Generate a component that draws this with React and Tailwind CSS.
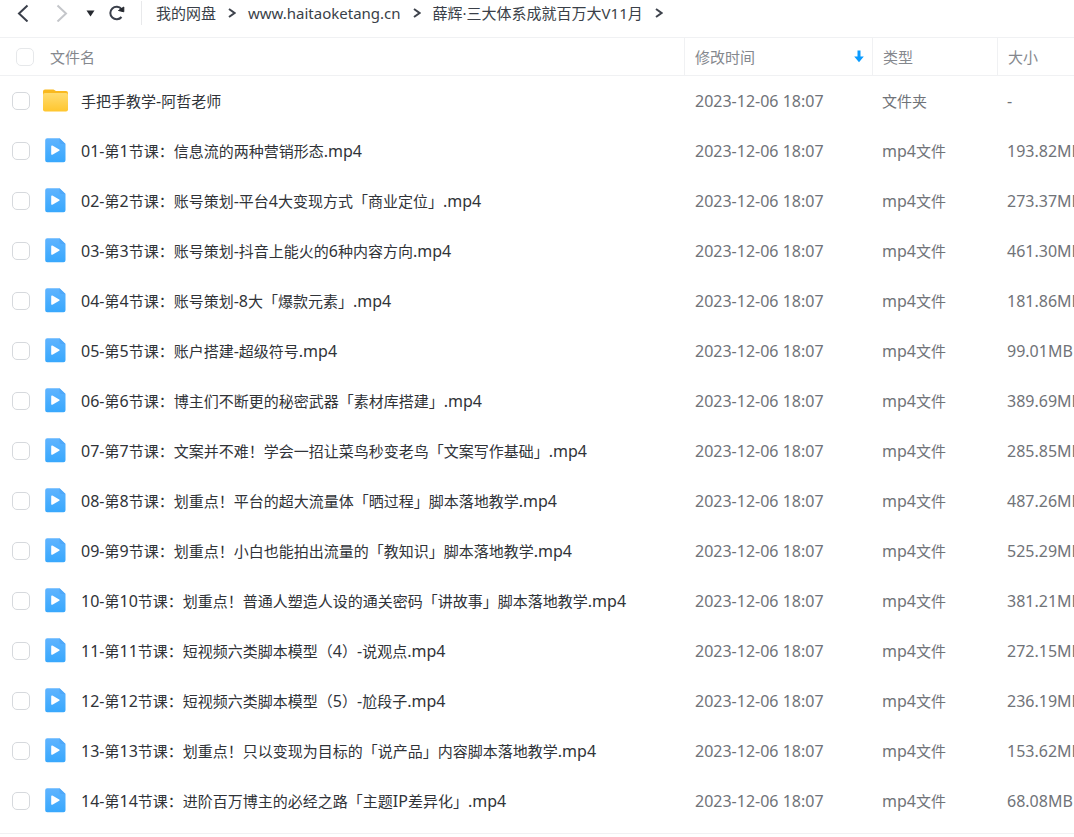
import { useState } from 'react';

const MODIFIED = '2023-12-06 18:07';

const FILES = [
  { name: '手把手教学-阿哲老师', folder: true, size: '-' },
  { name: '01-第1节课：信息流的两种营销形态.mp4', size: '193.82MB' },
  { name: '02-第2节课：账号策划-平台4大变现方式「商业定位」.mp4', size: '273.37MB' },
  { name: '03-第3节课：账号策划-抖音上能火的6种内容方向.mp4', size: '461.30MB' },
  { name: '04-第4节课：账号策划-8大「爆款元素」.mp4', size: '181.86MB' },
  { name: '05-第5节课：账户搭建-超级符号.mp4', size: '99.01MB' },
  { name: '06-第6节课：博主们不断更的秘密武器「素材库搭建」.mp4', size: '389.69MB' },
  { name: '07-第7节课：文案并不难！学会一招让菜鸟秒变老鸟「文案写作基础」.mp4', size: '285.85MB' },
  { name: '08-第8节课：划重点！平台的超大流量体「晒过程」脚本落地教学.mp4', size: '487.26MB' },
  { name: '09-第9节课：划重点！小白也能拍出流量的「教知识」脚本落地教学.mp4', size: '525.29MB' },
  { name: '10-第10节课：划重点！普通人塑造人设的通关密码「讲故事」脚本落地教学.mp4', size: '381.21MB' },
  { name: '11-第11节课：短视频六类脚本模型（4）-说观点.mp4', size: '272.15MB' },
  { name: '12-第12节课：短视频六类脚本模型（5）-尬段子.mp4', size: '236.19MB' },
  { name: '13-第13节课：划重点！只以变现为目标的「说产品」内容脚本落地教学.mp4', size: '153.62MB' },
  { name: '14-第14节课：进阶百万博主的必经之路「主题IP差异化」.mp4', size: '68.08MB' },
];

const CRUMBS = ['我的网盘', 'www.haitaoketang.cn', '薛辉·三大体系成就百万大V11月'];

// Latin runs are set one step larger than the Chinese around them
function MixedText({ children }) {
  return children.split(/([\x21-\x7e][\x20-\x7e]*)/).map((part, i) =>
    i % 2 ? <span key={i} className="text-base leading-5">{part}</span> : part
  );
}

function FolderIcon() {
  return (
    <svg width="26" height="24" viewBox="0 0 26 24" aria-hidden="true">
      <defs>
        <linearGradient id="folder" x1="0" y1="0" x2="0" y2="1">
          <stop offset="0" stopColor="#ffdc70" />
          <stop offset="1" stopColor="#ffc62e" />
        </linearGradient>
      </defs>
      <path d="M1 2.500a2 2 0 0 1 2-2h8.500L14 2h10a2 2 0 0 1 2 2V12H1z" fill="#f9b91f" />
      <rect x="1" y="4" width="25" height="18.500" rx="2" fill="url(#folder)" />
    </svg>
  );
}

function VideoIcon() {
  return (
    <svg width="26" height="26" viewBox="0 0 26 26" aria-hidden="true">
      <defs>
        <linearGradient id="video" x1="0" y1="0" x2="0" y2="1">
          <stop offset="0" stopColor="#5fb4ff" />
          <stop offset="1" stopColor="#38a8fd" />
        </linearGradient>
      </defs>
      <path d="M5.200 0.300h12.300l6 5.700V22.300a2 2 0 0 1-2 2H5.200a2 2 0 0 1-2-2V2.300a2 2 0 0 1 2-2z" fill="url(#video)" />
      <path d="M17.500 0.300l6 5.700h-4a2 2 0 0 1-2-2z" fill="#50a8f8" />
      <path d="M9.200 8.300c0-.8.6-1.100 1.200-.8l6.800 3.900c.6.3.6 1.100 0 1.400l-6.800 3.900c-.6.3-1.200 0-1.200-.8z" fill="#fff" />
    </svg>
  );
}

function Checkbox({ label, ...props }) {
  return (
    <input
      type="checkbox"
      aria-label={label}
      className="block size-[18px] shrink-0 appearance-none rounded-[5px] border border-[#d6d9dd] bg-white checked:border-[#06a7ff] checked:bg-[#06a7ff]"
      {...props}
    />
  );
}

function Chevron() {
  return (
    <svg width="8" height="10" viewBox="0 0 8 10" fill="none" stroke="#3f444d" strokeWidth="2" aria-hidden="true">
      <path d="M1 1l5.500 4L1 9" />
    </svg>
  );
}

function Toolbar() {
  return (
    <nav className="flex h-[37px] items-start whitespace-nowrap pl-4 text-[#3a3f48]">
      <div className="flex h-[26px] items-center">
        <button type="button" aria-label="后退" className="flex w-[39px] items-center">
          <svg width="14" height="18" viewBox="0 0 14 18" fill="none" stroke="#3a3f4a" strokeWidth="2">
            <path d="M11.500 1.500L3 9.500l8.500 8" />
          </svg>
        </button>
        <button type="button" aria-label="前进" disabled className="flex w-[31px] items-center">
          <svg width="14" height="18" viewBox="0 0 14 18" fill="none" stroke="#c4c6ca" strokeWidth="2">
            <path d="M2.500 1.500L11 9.500l-8.500 8" />
          </svg>
        </button>
        <button type="button" aria-label="历史" className="flex w-[22px] items-center">
          <svg width="10" height="8" viewBox="0 0 10 8">
            <path d="M0.500 1.500h8L4.500 7.500z" fill="#25282f" />
          </svg>
        </button>
        <button type="button" aria-label="刷新" className="flex w-[33px] items-center">
          <svg width="18" height="18" viewBox="0 0 18 18" fill="none">
            <path d="M13.500 13A6.300 6.300 0 1 1 13.500 5" stroke="#3a3f4a" strokeWidth="2" />
            <path d="M10.500 6.500L15.800 3V7.800z" fill="#25282f" stroke="#25282f" />
          </svg>
        </button>
        <div className="mr-[14px] h-6 w-px bg-[#e8e9eb]" />
        <ol className="flex items-center gap-3 text-[15px] leading-5">
          {CRUMBS.map((crumb) => (
            <li key={crumb} className="flex items-center gap-3">
              <a href="#">{crumb}</a>
              <Chevron />
            </li>
          ))}
        </ol>
      </div>
    </nav>
  );
}

export default function App() {
  const [selected, setSelected] = useState([]);

  const toggle = (name) =>
    setSelected((prev) => (prev.includes(name) ? prev.filter((n) => n !== name) : [...prev, name]));

  return (
    <main className="overflow-hidden bg-white font-['Noto_Sans','Noto_Sans_CJK_SC',sans-serif] text-[15px] leading-5">
      <Toolbar />
      <div className="border-b border-[#f0f1f3] pb-[7px]">
        <table className="w-full table-fixed border-separate border-spacing-0 whitespace-nowrap text-left">
          <colgroup>
            <col />
            <col className="w-[188px]" />
            <col className="w-[125px]" />
            <col className="w-[77px]" />
          </colgroup>
          <thead className="text-[#85888e]">
            <tr className="h-[39px] *:border-y *:border-[#f0f1f3] *:p-0 *:font-normal">
              <th>
                <div className="flex items-center gap-4 pl-4">
                  <span className="opacity-60">
                    <Checkbox
                      label="全选"
                      checked={selected.length === FILES.length}
                      onChange={(e) => setSelected(e.target.checked ? FILES.map((f) => f.name) : [])}
                    />
                  </span>
                  文件名
                </div>
              </th>
              <th className="border-l">
                <button type="button" className="flex w-full items-center justify-between pl-[10px] pr-2">
                  修改时间
                  <svg width="10" height="13" viewBox="0 0 10 13" fill="#0a9bff" aria-hidden="true">
                    <path d="M3.500 0.500h3v6H9.800L5 12.200 0.200 6.500h3.300z" />
                  </svg>
                </button>
              </th>
              <th className="border-l"><div className="pl-[10px]">类型</div></th>
              <th className="border-l"><div className="pl-[10px]">大小</div></th>
            </tr>
          </thead>
          <tbody className="text-[#707378]">
            {FILES.map((file) => (
              <tr key={file.name} className="h-[50px] *:p-0 hover:bg-[#f7f9fc]">
                <td>
                  <div className="flex items-center pl-3">
                    <Checkbox
                      label={file.name}
                      checked={selected.includes(file.name)}
                      onChange={() => toggle(file.name)}
                    />
                    <span className="mx-3 flex w-[27px] shrink-0">
                      {file.folder ? <FolderIcon /> : <VideoIcon />}
                    </span>
                    <a href="#" className="text-[#303338]"><MixedText>{file.name}</MixedText></a>
                  </div>
                </td>
                <td><div className="pl-[11px]"><MixedText>{MODIFIED}</MixedText></div></td>
                <td><div className="pl-[10px]"><MixedText>{file.folder ? '文件夹' : 'mp4文件'}</MixedText></div></td>
                <td><div className="pl-[10px]"><MixedText>{file.size}</MixedText></div></td>
              </tr>
            ))}
          </tbody>
        </table>
      </div>
    </main>
  );
}
